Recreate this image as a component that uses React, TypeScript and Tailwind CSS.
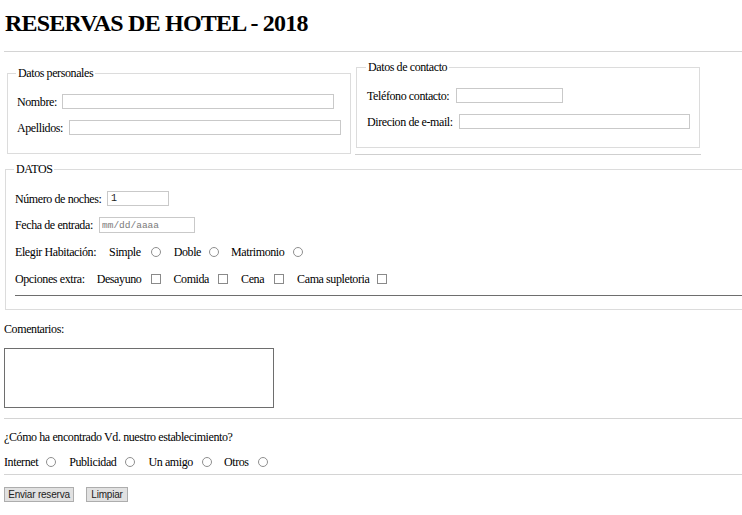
import React from "react";

function Radio({ className = "" }: { className?: string }) {
  return (
    <input
      type="radio"
      className={
        "appearance-none w-[10px] h-[10px] rounded-full border border-[#8f8f8f] bg-white shrink-0 " +
        className
      }
    />
  );
}

function Check({ className = "" }: { className?: string }) {
  return (
    <input
      type="checkbox"
      className={
        "appearance-none w-[10px] h-[10px] border border-[#8a8a8a] bg-white shrink-0 " +
        className
      }
    />
  );
}

export default function App() {
  return (
    <div className="w-[742px] h-[515px] overflow-hidden bg-white text-black text-[12px] leading-[14px] tracking-[-0.4px] font-['Liberation_Serif','Times_New_Roman',serif]">
      <div className="flex flex-col pl-[4px]">
        <h1 className="mt-[9px] h-[28px] pl-[1px] text-[24px] leading-[28px] font-bold tracking-[-0.78px]">
          RESERVAS DE HOTEL - 2018
        </h1>
        <div className="mt-[14px] h-px w-[760px] bg-[#d4d4d4]" />

        <div className="flex items-start">
          <fieldset className="mt-[14px] ml-[3px] w-[344px] border border-[#dcdcdc] pl-[9px] pr-[9px] pt-[14px] pb-[18px] flex flex-col gap-[11px]">
            <legend className="px-[2px] -ml-[1px] leading-[14px]">Datos personales</legend>
            <div className="flex items-center h-[15px]">
              <span className="w-[45px] shrink-0">Nombre:</span>
              <input type="text" className="h-[15px] w-[272px] border border-[#c9c9c9]" />
            </div>
            <div className="flex items-center h-[15px]">
              <span className="w-[52px] shrink-0">Apellidos:</span>
              <input type="text" className="h-[15px] w-[272px] border border-[#c9c9c9]" />
            </div>
          </fieldset>

          <div className="mt-[8px] ml-[4px] w-[346px] flex flex-col">
            <fieldset className="ml-[1px] w-[344px] border border-[#dcdcdc] pl-[10px] pr-[9px] pt-[14px] pb-[18px] flex flex-col gap-[11px]">
              <legend className="px-[2px] -ml-[1px] leading-[14px]">Datos de contacto</legend>
              <div className="flex items-center h-[15px]">
                <span className="w-[89px] shrink-0">Teléfono contacto:</span>
                <input type="text" className="h-[15px] w-[107px] border border-[#c9c9c9]" />
              </div>
              <div className="flex items-center h-[15px]">
                <span className="w-[92px] shrink-0">Direcion de e-mail:</span>
                <input type="text" className="h-[15px] w-[231px] border border-[#c9c9c9]" />
              </div>
            </fieldset>
            <div className="mt-[6px] h-px w-[346px] bg-[#cfcfcf]" />
          </div>
        </div>

        <fieldset className="mt-[7px] ml-[1px] w-[760px] border border-[#dcdcdc] pl-[9px] pt-[15px] pb-[13px] flex flex-col">
          <legend className="px-[2px] -ml-[1px] leading-[14px]">DATOS</legend>
          <div className="flex items-center h-[15px]">
            <span className="w-[92px] shrink-0">Número de noches:</span>
            <input
              type="text"
              defaultValue="1"
              className="h-[15px] w-[62px] border border-[#c9c9c9] px-[3px] text-[10px] tracking-normal font-['Liberation_Mono',monospace] text-[#222]"
            />
          </div>
          <div className="mt-[11px] flex items-center h-[16px]">
            <span className="w-[84px] shrink-0">Fecha de entrada:</span>
            <input
              type="text"
              placeholder="mm/dd/aaaa"
              className="h-[16px] w-[96px] border border-[#c9c9c9] px-[2px] text-[9.5px] tracking-normal font-['Liberation_Mono',monospace] placeholder:text-[#7a7a7a]"
            />
          </div>
          <div className="mt-[11px] flex items-center h-[16px]">
            <span>Elegir Habitación:</span>
            <span className="ml-[13px]">Simple</span>
            <Radio className="ml-[10px]" />
            <span className="ml-[13px]">Doble</span>
            <Radio className="ml-[8px]" />
            <span className="ml-[12px]">Matrimonio</span>
            <Radio className="ml-[9px]" />
          </div>
          <div className="mt-[11px] flex items-center h-[16px]">
            <span>Opciones extra:</span>
            <span className="ml-[12px]">Desayuno</span>
            <Check className="ml-[10px]" />
            <span className="ml-[12px]">Comida</span>
            <Check className="ml-[9px]" />
            <span className="ml-[13px]">Cena</span>
            <Check className="ml-[10px]" />
            <span className="ml-[13px]">Cama supletoria</span>
            <Check className="ml-[8px]" />
          </div>
          <div className="mt-[8px] h-px w-full bg-[#6e6e6e]" />
        </fieldset>

        <div className="mt-[12px] h-[14px]">Comentarios:</div>
        <textarea className="mt-[12px] h-[60px] w-[270px] border border-[#6e6e6e] resize-none" />
        <div className="mt-[10px] h-px w-[760px] bg-[#d4d4d4]" />
        <div className="mt-[11px] h-[14px]">¿Cómo ha encontrado Vd. nuestro establecimiento?</div>
        <div className="mt-[11px] flex items-center h-[14px]">
          <span>Internet</span>
          <Radio className="ml-[8px]" />
          <span className="ml-[13px]">Publicidad</span>
          <Radio className="ml-[9px]" />
          <span className="ml-[13px]">Un amigo</span>
          <Radio className="ml-[9px]" />
          <span className="ml-[12px]">Otros</span>
          <Radio className="ml-[9px]" />
        </div>
        <div className="mt-[5px] h-px w-[760px] bg-[#d4d4d4]" />
        <div className="mt-[12px] flex items-center">
          <button className="w-[70px] h-[15px] bg-[#e1e1e1] border border-[#adadad] text-[10px] leading-[13px] tracking-[-0.2px] text-[#222] font-['Liberation_Sans',Arial,sans-serif]">
            Enviar reserva
          </button>
          <button className="ml-[12px] w-[42px] h-[15px] bg-[#e1e1e1] border border-[#adadad] text-[10px] leading-[13px] tracking-[-0.2px] text-[#222] font-['Liberation_Sans',Arial,sans-serif]">
            Limpiar
          </button>
        </div>
      </div>
    </div>
  );
}
